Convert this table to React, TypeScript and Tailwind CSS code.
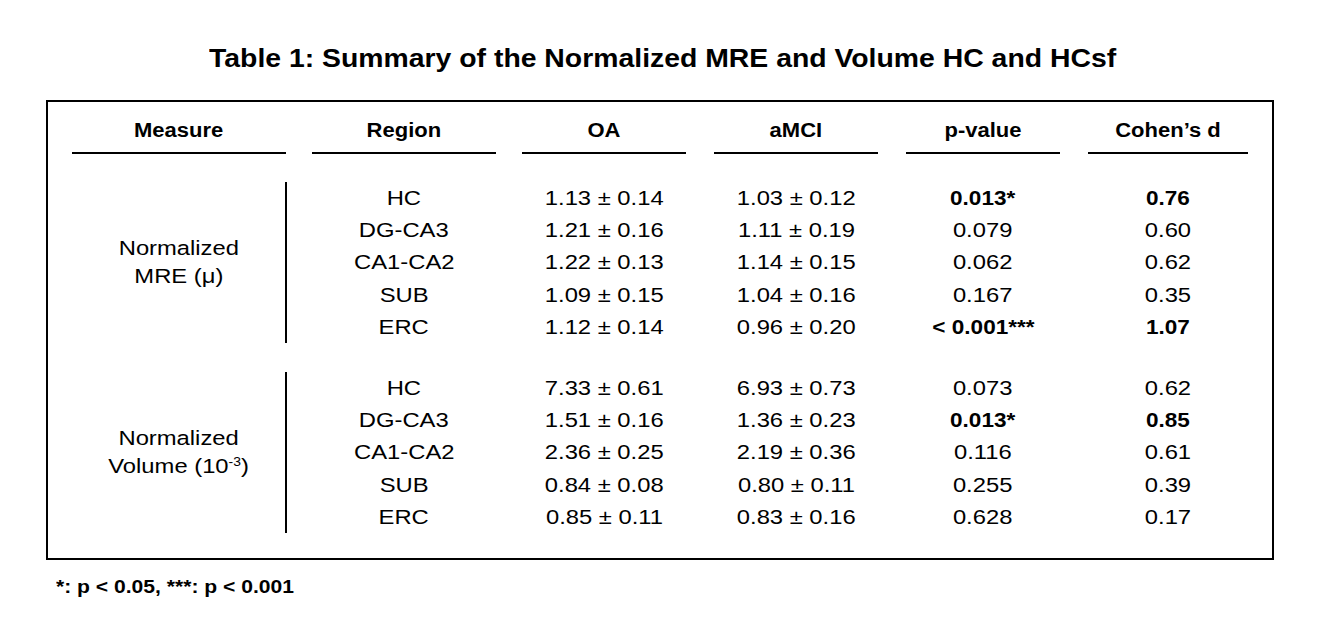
const font = "font-['Liberation_Sans',Arial,sans-serif]";

type Row = { region: string; oa: string; amci: string; p: string; d: string; bold?: boolean };

const groups: { label: React.ReactNode; rows: Row[] }[] = [
  {
    label: (
      <>
        Normalized
        <br />
        MRE (μ)
      </>
    ),
    rows: [
      { region: "HC", oa: "1.13 ± 0.14", amci: "1.03 ± 0.12", p: "0.013*", d: "0.76", bold: true },
      { region: "DG-CA3", oa: "1.21 ± 0.16", amci: "1.11 ± 0.19", p: "0.079", d: "0.60" },
      { region: "CA1-CA2", oa: "1.22 ± 0.13", amci: "1.14 ± 0.15", p: "0.062", d: "0.62" },
      { region: "SUB", oa: "1.09 ± 0.15", amci: "1.04 ± 0.16", p: "0.167", d: "0.35" },
      { region: "ERC", oa: "1.12 ± 0.14", amci: "0.96 ± 0.20", p: "< 0.001***", d: "1.07", bold: true },
    ],
  },
  {
    label: (
      <>
        Normalized
        <br />
        Volume (10<sup className="text-[12px] -top-[7px]">-3</sup>)
      </>
    ),
    rows: [
      { region: "HC", oa: "7.33 ± 0.61", amci: "6.93 ± 0.73", p: "0.073", d: "0.62" },
      { region: "DG-CA3", oa: "1.51 ± 0.16", amci: "1.36 ± 0.23", p: "0.013*", d: "0.85", bold: true },
      { region: "CA1-CA2", oa: "2.36 ± 0.25", amci: "2.19 ± 0.36", p: "0.116", d: "0.61" },
      { region: "SUB", oa: "0.84 ± 0.08", amci: "0.80 ± 0.11", p: "0.255", d: "0.39" },
      { region: "ERC", oa: "0.85 ± 0.11", amci: "0.83 ± 0.16", p: "0.628", d: "0.17" },
    ],
  },
];

const headers = [
  { name: "Measure", cls: "w-[214px]" },
  { name: "Region", cls: "w-[184px] ml-[26px]" },
  { name: "OA", cls: "w-[164px] ml-[26px]" },
  { name: "aMCI", cls: "w-[164px] ml-[28px]" },
  { name: "p-value", cls: "w-[154px] ml-[28px]" },
  { name: "Cohen’s d", cls: "w-[160px] ml-[28px]" },
];

function Cell({ cls, bold, children }: { cls: string; bold?: boolean; children: React.ReactNode }) {
  return (
    <div className={`${cls} flex items-center justify-center`}>
      <span className={`inline-block whitespace-nowrap ${bold ? "font-bold scale-x-[1.1]" : "scale-x-[1.16]"}`}>
        {children}
      </span>
    </div>
  );
}

export default function App() {
  return (
    <div className={`w-[1326px] h-[620px] bg-white text-black ${font} flex flex-col`}>
      <h1 className="mt-[47px] text-center text-[25px] leading-[22px] font-bold">
        <span className="inline-block scale-x-[1.135]">
          Table 1: Summary of the Normalized MRE and Volume HC and HCsf
        </span>
      </h1>

      <div className="ml-[46px] mt-[31px] w-[1228px] border-2 border-black px-[24px] pt-[19px] pb-[25px] text-[20.5px] leading-[18px]">
        <div className="flex">
          {headers.map((h) => (
            <div key={h.name} className={`${h.cls} border-b-2 border-black pb-[13px] text-center text-[20px] font-bold`}>
              <span className="inline-block scale-x-[1.1]">{h.name}</span>
            </div>
          ))}
        </div>

        {groups.map((g, gi) => (
          <div key={gi} className={`flex ${gi === 0 ? "mt-[28px]" : "mt-[29px]"}`}>
            <div className="w-[215px] border-r-2 border-black flex items-center justify-center text-center leading-[28px]">
              <span className="inline-block scale-x-[1.16]">{g.label}</span>
            </div>
            <div className="flex flex-col">
              {g.rows.map((r) => (
                <div key={r.region} className="flex h-[32.2px]">
                  <Cell cls="w-[184px] ml-[25px]">{r.region}</Cell>
                  <Cell cls="w-[164px] ml-[26px]">{r.oa}</Cell>
                  <Cell cls="w-[164px] ml-[28px]">{r.amci}</Cell>
                  <Cell cls="w-[154px] ml-[28px]" bold={r.bold}>{r.p}</Cell>
                  <Cell cls="w-[160px] ml-[28px]" bold={r.bold}>{r.d}</Cell>
                </div>
              ))}
            </div>
          </div>
        ))}
      </div>

      <p className="ml-[56px] mt-[18px] text-[19px] leading-[17px] font-bold">
        <span className="inline-block origin-left scale-x-[1.11]">*: p &lt; 0.05, ***: p &lt; 0.001</span>
      </p>
    </div>
  );
}
